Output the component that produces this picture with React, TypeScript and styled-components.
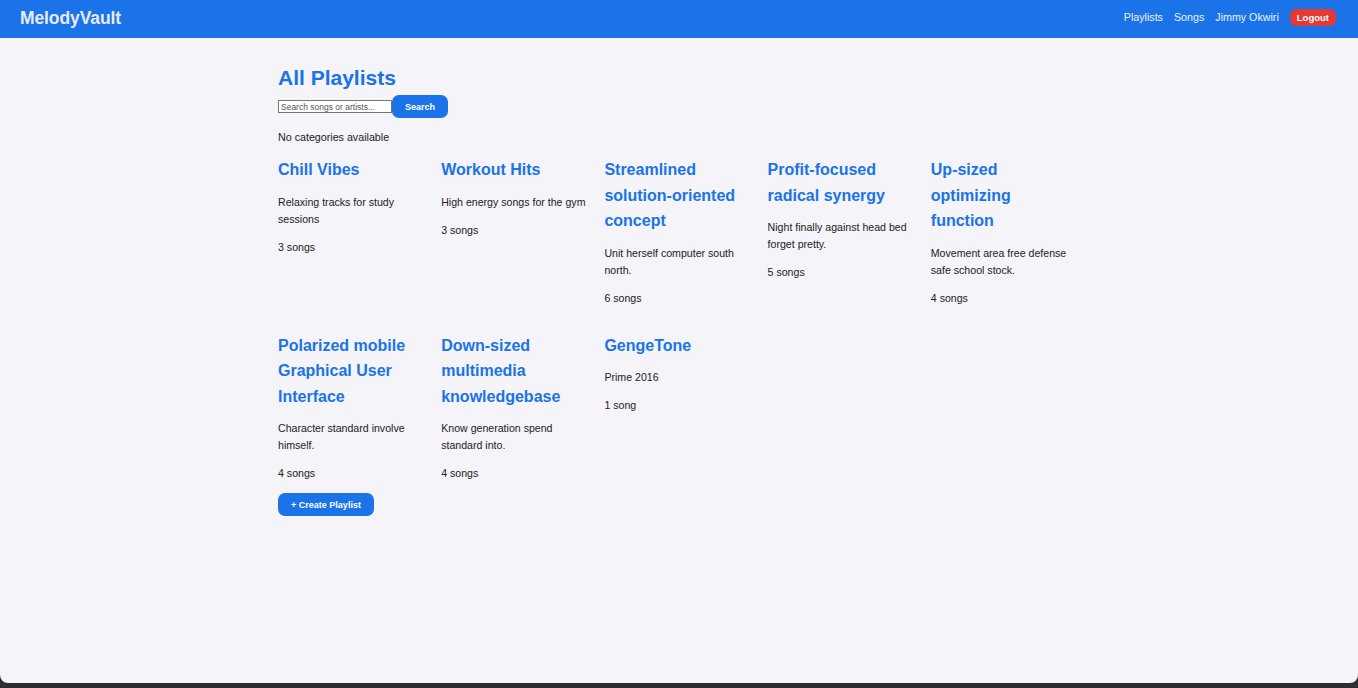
import React from 'react';
import styled, { createGlobalStyle } from 'styled-components';

const GlobalStyle = createGlobalStyle`
  html, body {
    margin: 0;
    padding: 0;
    background: #2e2e2e;
    font-family: "Liberation Sans", Arial, sans-serif;
  }
  * { box-sizing: border-box; }
`;

const Page = styled.div`
  height: 683px;
  background: #f4f4f9;
  border-radius: 0 0 8px 8px;
  overflow: hidden;
  color: #222;
`;

const Header = styled.header`
  height: 38px;
  background: #1a73e8;
  display: flex;
  align-items: center;
  justify-content: space-between;
  padding: 0 22px 4px 20px;
`;

const Logo = styled.div`
  font-size: 17.5px;
  font-weight: bold;
  color: #e8eaff;
  letter-spacing: -0.1px;
  margin-top: 2px;
`;

const Nav = styled.nav`
  display: flex;
  align-items: center;
  gap: 11px;
`;

const NavLink = styled.a`
  font-size: 10.7px;
  color: #eef1ff;
  text-decoration: none;
`;

const LogoutButton = styled.button`
  background: #e53935;
  color: #fff;
  border: none;
  border-radius: 6px;
  height: 17px;
  padding: 0 7px;
  font-family: inherit;
  font-size: 9.5px;
  font-weight: bold;
`;

const Content = styled.main`
  width: 800px;
  margin: 0 auto;
  padding-top: 24px;
  position: relative;
  left: -1px;
`;

const PageTitle = styled.h2`
  margin: 0;
  font-size: 21px;
  line-height: 32px;
  color: #1a73e8;
`;

const SearchForm = styled.form`
  display: flex;
  align-items: center;
  margin-top: 1px;
`;

const SearchInput = styled.input`
  width: 114px;
  height: 13px;
  border: 1px solid #767676;
  padding: 0 2px;
  font-family: inherit;
  font-size: 8.5px;
  background: #fff;
  &::placeholder { color: #555; }
`;

const PrimaryButton = styled.button<{ $w: number }>`
  width: ${p => p.$w}px;
  height: 23px;
  background: #1a73e8;
  color: #fff;
  border: none;
  border-radius: 7px;
  font-family: inherit;
  font-size: 9px;
  font-weight: bold;
  padding: 0;
`;

const Notice = styled.p`
  font-size: 10.7px;
  line-height: 17px;
  margin: 11px 0;
`;

const Grid = styled.div`
  display: grid;
  grid-template-columns: repeat(5, 1fr);
  column-gap: 16px;
  row-gap: 15px;
`;

const Card = styled.div``;

const CardTitle = styled.h3`
  margin: 0;
  font-size: 16px;
  line-height: 25.5px;
  color: #1a73e8;
`;

const CardText = styled.p`
  font-size: 10.6px;
  line-height: 17px;
  margin: 11px 0;
`;

const playlists = [
  { title: 'Chill Vibes', desc: 'Relaxing tracks for study sessions', count: '3 songs' },
  { title: 'Workout Hits', desc: 'High energy songs for the gym', count: '3 songs' },
  { title: 'Streamlined solution-oriented concept', desc: 'Unit herself computer south north.', count: '6 songs' },
  { title: 'Profit-focused radical synergy', desc: 'Night finally against head bed forget pretty.', count: '5 songs' },
  { title: 'Up-sized optimizing function', desc: 'Movement area free defense safe school stock.', count: '4 songs' },
  { title: 'Polarized mobile Graphical User Interface', desc: 'Character standard involve himself.', count: '4 songs' },
  { title: 'Down-sized multimedia knowledgebase', desc: 'Know generation spend standard into.', count: '4 songs' },
  { title: 'GengeTone', desc: 'Prime 2016', count: '1 song' },
];

const App = () => {
  return (
    <>
      <GlobalStyle />
      <Page>
        <Header>
          <Logo>MelodyVault</Logo>
          <Nav>
            <NavLink>Playlists</NavLink>
            <NavLink>Songs</NavLink>
            <NavLink>Jimmy Okwiri</NavLink>
            <LogoutButton>Logout</LogoutButton>
          </Nav>
        </Header>
        <Content>
          <PageTitle>All Playlists</PageTitle>
          <SearchForm onSubmit={e => e.preventDefault()}>
            <SearchInput placeholder="Search songs or artists..." />
            <PrimaryButton $w={56}>Search</PrimaryButton>
          </SearchForm>
          <Notice>No categories available</Notice>
          <Grid>
            {playlists.map(p => (
              <Card key={p.title}>
                <CardTitle>{p.title}</CardTitle>
                <CardText>{p.desc}</CardText>
                <CardText>{p.count}</CardText>
              </Card>
            ))}
          </Grid>
          <PrimaryButton $w={96}>+ Create Playlist</PrimaryButton>
        </Content>
      </Page>
    </>
  );
};

export default App;
